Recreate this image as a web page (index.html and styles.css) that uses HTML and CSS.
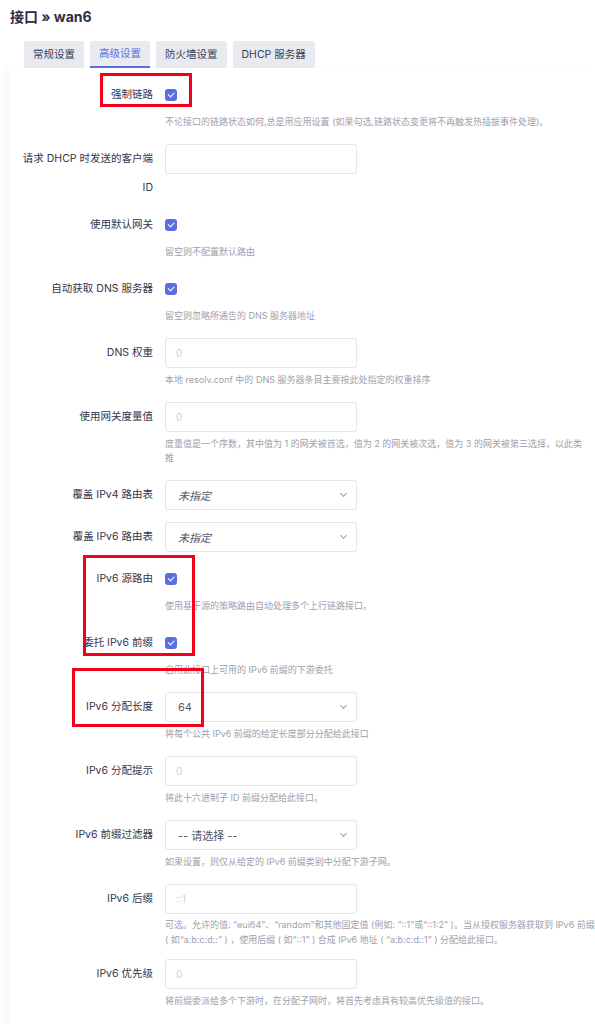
FILE: index.html
```html
<!DOCTYPE html>
<html lang="zh-CN">
  <head>
    <meta charset="UTF-8" />
    <meta name="viewport" content="width=device-width, initial-scale=1.0" />
    <title>接口 » wan6</title>
    <link rel="stylesheet" href="styles.css">
  </head>
  <body>
    <h2 class="page-title">接口 » wan6</h2>

    <ul class="tabs">
      <li class="tab">常规设置</li>
      <li class="tab active">高级设置</li>
      <li class="tab">防火墙设置</li>
      <li class="tab">DHCP 服务器</li>
    </ul>

    <div class="panel">
      <div class="field">
        <label class="field-label">强制链路</label>
        <div class="field-control"><span class="checkbox"></span></div>
        <div class="field-desc">不论接口的链路状态如何,总是用应用设置 (如果勾选,链路状态变更将不再触发热插拔事件处理)。</div>
      </div>

      <div class="field field-tall">
        <label class="field-label label-wrap">请求 DHCP 时发送的客户端<br>ID</label>
        <div class="field-control"><input class="input" type="text"></div>
      </div>

      <div class="field">
        <label class="field-label">使用默认网关</label>
        <div class="field-control"><span class="checkbox"></span></div>
        <div class="field-desc">留空则不配置默认路由</div>
      </div>

      <div class="field">
        <label class="field-label">自动获取 DNS 服务器</label>
        <div class="field-control"><span class="checkbox"></span></div>
        <div class="field-desc">留空则忽略所通告的 DNS 服务器地址</div>
      </div>

      <div class="field">
        <label class="field-label">DNS 权重</label>
        <div class="field-control"><input class="input" type="text" placeholder="0"></div>
        <div class="field-desc">本地 resolv.conf 中的 DNS 服务器条目主要按此处指定的权重排序</div>
      </div>

      <div class="field">
        <label class="field-label">使用网关度量值</label>
        <div class="field-control"><input class="input" type="text" placeholder="0"></div>
        <div class="field-desc desc-lines">度量值是一个序数，其中值为 1 的网关被首选，值为 2 的网关被次选，值为 3 的网关被第三选择，以此类<br>推</div>
      </div>

      <div class="field field-bare">
        <label class="field-label">覆盖 IPv4 路由表</label>
        <div class="field-control"><div class="select"><span class="select-value unset">未指定</span><span class="chevron"></span></div></div>
      </div>

      <div class="field field-bare">
        <label class="field-label">覆盖 IPv6 路由表</label>
        <div class="field-control"><div class="select"><span class="select-value unset">未指定</span><span class="chevron"></span></div></div>
      </div>

      <div class="field">
        <label class="field-label">IPv6 源路由</label>
        <div class="field-control"><span class="checkbox"></span></div>
        <div class="field-desc">使用基于源的策略路由自动处理多个上行链路接口。</div>
      </div>

      <div class="field">
        <label class="field-label">委托 IPv6 前缀</label>
        <div class="field-control"><span class="checkbox"></span></div>
        <div class="field-desc">启用此接口上可用的 IPv6 前缀的下游委托</div>
      </div>

      <div class="field">
        <label class="field-label">IPv6 分配长度</label>
        <div class="field-control"><div class="select"><span class="select-value">64</span><span class="chevron"></span></div></div>
        <div class="field-desc">将每个公共 IPv6 前缀的给定长度部分分配给此接口</div>
      </div>

      <div class="field">
        <label class="field-label">IPv6 分配提示</label>
        <div class="field-control"><input class="input" type="text" placeholder="0"></div>
        <div class="field-desc">将此十六进制子 ID 前缀分配给此接口。</div>
      </div>

      <div class="field">
        <label class="field-label">IPv6 前缀过滤器</label>
        <div class="field-control"><div class="select"><span class="select-value">-- 请选择 --</span><span class="chevron"></span></div></div>
        <div class="field-desc">如果设置，则仅从给定的 IPv6 前缀类别中分配下游子网。</div>
      </div>

      <div class="field field-snug">
        <label class="field-label">IPv6 后缀</label>
        <div class="field-control"><input class="input" type="text" placeholder="::1"></div>
        <div class="field-desc desc-lines">可选。允许的值: “eui64”、“random”和其他固定值 (例如: “::1”或“::1:2” )。当从授权服务器获取到 IPv6 前缀<br>( 如“a:b:c:d::” ) ，使用后缀 ( 如“::1” ) 合成 IPv6 地址 ( “a:b:c:d::1” ) 分配给此接口。</div>
      </div>

      <div class="field">
        <label class="field-label">IPv6 优先级</label>
        <div class="field-control"><input class="input" type="text" placeholder="0"></div>
        <div class="field-desc">将前缀委派给多个下游时，在分配子网时，将首先考虑具有较高优先级值的接口。</div>
      </div>
    </div>

    <!-- annotation boxes drawn over the screenshot -->
    <div class="mark mark-link"></div>
    <div class="mark mark-source"></div>
    <div class="mark mark-length"></div>
  </body>
</html>
```

FILE: styles.css
```css
body {
  margin: 0;
  padding: 0;
  background-color: #fff;
  font-family: Inter, "Noto Sans CJK SC", sans-serif;
  color: #33354d;
  position: relative;
  min-height: 1024px;
}

.page-title {
  margin: 0;
  padding: 8px 10px 0;
  height: 25px;
  font-size: 14px;
  line-height: 18px;
  font-weight: 700;
  color: #2c2e45;
}

.tabs {
  list-style: none;
  margin: 8px 0 0;
  padding: 0 0 0 24px;
  display: flex;
  gap: 6px;
}

.tab {
  height: 27px;
  box-sizing: border-box;
  padding: 0 9px;
  line-height: 27px;
  font-size: 10.5px;
  color: #3a3c52;
  background: #e7eaef;
  border-radius: 3px 3px 0 0;
}

.tab.active {
  color: #5b6ee1;
  border-bottom: 2px solid #5b6ee1;
  line-height: 26px;
}

.panel {
  margin-left: 9px;
  padding: 12px 0 20px;
  background: #fff;
  box-shadow: -3px 0 6px rgba(0, 0, 0, 0.04);
  min-height: 940px;
}

.field {
  display: grid;
  grid-template-columns: 144px 1fr;
  column-gap: 12px;
  padding-bottom: 15px;
}

.field-tall {
  padding-bottom: 8px;
}

.field-bare {
  padding-bottom: 12px;
}

.field-snug {
  padding-bottom: 12px;
}

.field-label {
  grid-column: 1;
  grid-row: 1 / span 2;
  text-align: right;
  font-size: 10.5px;
  line-height: 30px;
  color: #33354d;
}

.label-wrap {
  line-height: 29px;
}

.field-control {
  grid-column: 2;
  height: 30px;
  display: flex;
  align-items: center;
}

.field-desc {
  grid-column: 2;
  margin-top: 5px;
  font-size: 9px;
  line-height: 14px;
  color: #a0a0ad;
}

.desc-lines {
  white-space: nowrap;
}

.field-snug .field-desc {
  margin-top: 3px;
  line-height: 15px;
}

.checkbox {
  width: 12px;
  height: 12px;
  border-radius: 3px;
  background: #5b6ee1;
  position: relative;
}

.checkbox::after {
  content: "";
  position: absolute;
  left: 3px;
  top: 3px;
  width: 5px;
  height: 2.5px;
  border-left: 1.6px solid #fff;
  border-bottom: 1.6px solid #fff;
  transform: rotate(-45deg);
}

.input,
.select {
  width: 192px;
  height: 30px;
  box-sizing: border-box;
  border: 1px solid #e3e5ea;
  border-radius: 3px;
  background: #fff;
  font-family: inherit;
}

.input {
  padding: 0 10px;
  font-size: 10px;
  outline: none;
}

.input::placeholder {
  color: #d0d1d8;
}

.select {
  display: flex;
  align-items: center;
  justify-content: space-between;
  padding: 0 10px 0 12px;
}

.select-value {
  font-size: 11px;
  color: #55576a;
}

.select-value.unset {
  font-style: italic;
}

.chevron {
  width: 4px;
  height: 4px;
  border-right: 1px solid #9a9cb0;
  border-bottom: 1px solid #9a9cb0;
  transform: rotate(45deg);
  margin-top: -3px;
}

.mark {
  position: absolute;
  border: 3px solid #f2001c;
  box-sizing: border-box;
}

.mark-link {
  left: 100px;
  top: 73px;
  width: 92px;
  height: 34px;
}

.mark-source {
  left: 83px;
  top: 555px;
  width: 112px;
  height: 101px;
}

.mark-length {
  left: 72px;
  top: 668px;
  width: 132px;
  height: 59px;
}
```
